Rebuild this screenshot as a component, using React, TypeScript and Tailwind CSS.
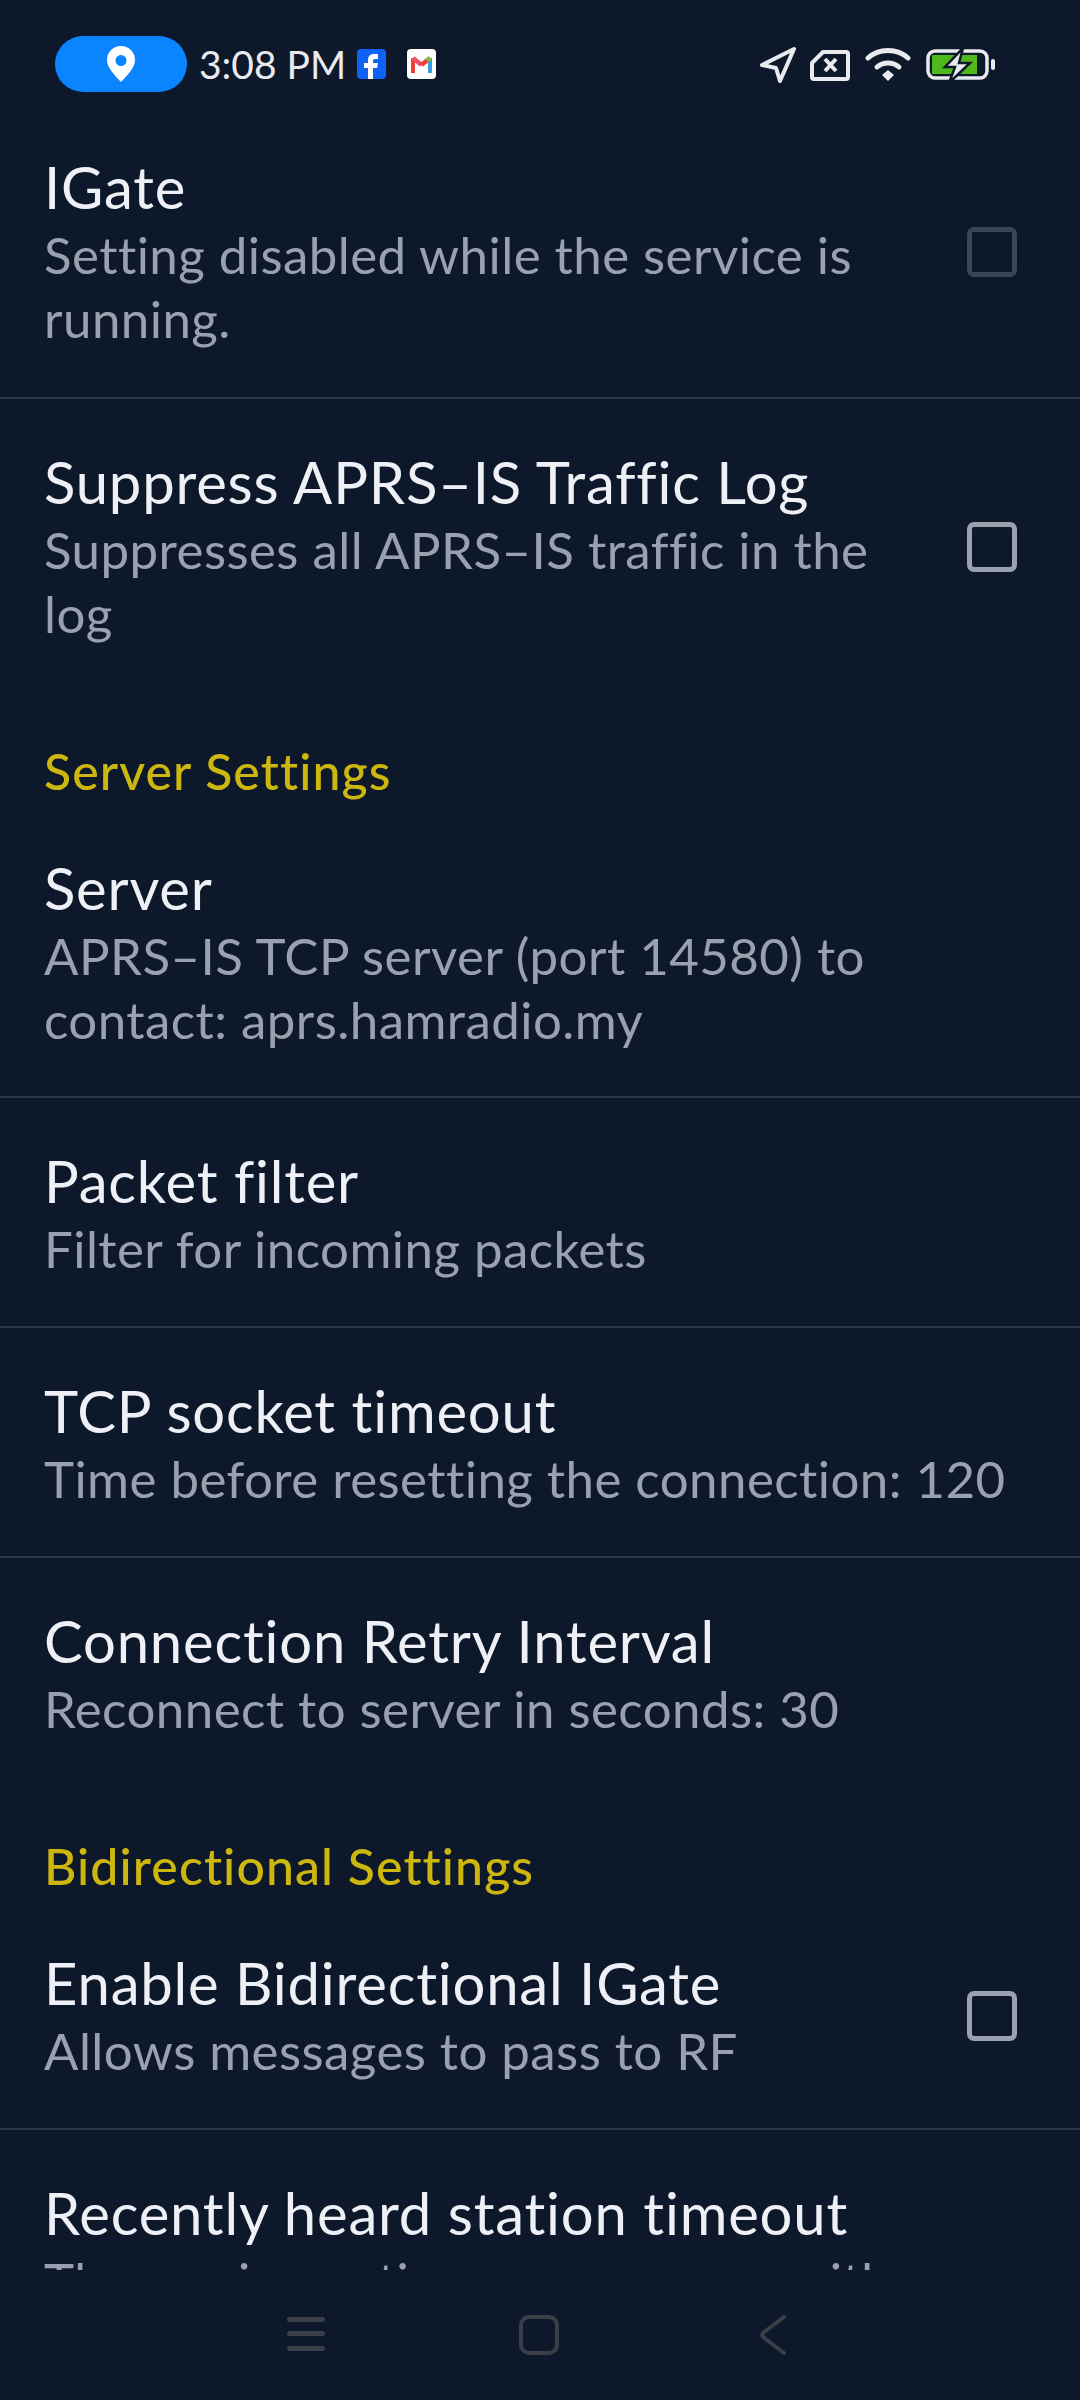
import React from 'react';

const font = "[font-family:Lato,'Noto_Sans',sans-serif]";

const Checkbox = ({ disabled = false }: { disabled?: boolean }) => (
  <div
    className={`w-[50px] h-[50px] shrink-0 rounded-[7px] border-[5px] ${
      disabled ? 'border-[#3a4557]' : 'border-[#9aa1ae]'
    }`}
  />
);

interface RowProps {
  title: string;
  summary: string;
  divider?: boolean;
  check?: boolean;
  disabled?: boolean;
  className?: string;
}

const Row = ({ title, summary, divider = true, check = false, disabled = false, className = '' }: RowProps) => (
  <div className={`flex items-center pl-[44px] pr-[63px] pt-[48px] ${divider ? 'border-b-2 border-[#2c3748]' : ''} ${className}`}>
    <div className={`flex-1 min-w-0 ${check ? 'pr-[41px]' : ''}`}>
      <div className="text-[58px] leading-[70px] tracking-[0.8px] text-[#eef0f6] whitespace-nowrap">{title}</div>
      <div className="mt-px text-[51px] leading-[64px] tracking-[0.45px] text-[#9aa1ae]">{summary}</div>
    </div>
    {check && <Checkbox disabled={disabled} />}
  </div>
);

const SectionHeader = ({ label }: { label: string }) => (
  <div className="pl-[44px] pt-[50px] h-[114px] text-[50px] leading-[60px] tracking-[1.1px] font-medium text-[#cdb70f]">{label}</div>
);

const StatusBar = () => (
  <div className="h-[104px] shrink-0 flex items-start pt-[36px] pl-[55px] pr-[84px]">
    <div className="w-[132px] h-[56px] rounded-full bg-[#0a84ff] flex items-center justify-center">
      <svg width="28" height="36" viewBox="0 0 28 36">
        <path fillRule="evenodd" d="M14 0a14 14 0 0 1 14 14c0 7-7 15-14 22C7 29 0 21 0 14A14 14 0 0 1 14 0zm0 9a5.5 5.5 0 1 0 0 11 5.5 5.5 0 0 0 0-11z" fill="#fff" />
      </svg>
    </div>
    <span className="ml-[12px] w-[146px] text-[39px] leading-[56px] text-[#e8eaee] whitespace-nowrap">3:08 PM</span>
    <svg className="ml-[12px] mt-[13px]" width="29" height="30" viewBox="0 0 29 30">
      <rect width="29" height="30" rx="4" fill="#0d63f5" />
      <path d="M11 30V19H7v-5h4v-3c0-4 2.500-6 6-6h4v5h-3c-1.500 0-2 .7-2 2v2h5l-1 5h-4v11z" fill="#fff" />
    </svg>
    <svg className="ml-[21px] mt-[13px]" width="29" height="30" viewBox="0 0 29 30">
      <rect width="29" height="30" rx="4" fill="#fff" />
      <path d="M6 24V9" stroke="#ea4335" strokeWidth="4" />
      <path d="M23 24V9" stroke="#34a0e0" strokeWidth="4" />
      <path d="M6 9l8.500 7" stroke="#f0506e" strokeWidth="4.500" />
      <path d="M14.500 16L23 9" stroke="#ea4335" strokeWidth="4.500" />
      <path d="M20 11.500L23 9" stroke="#7cc142" strokeWidth="4.500" />
    </svg>
    <div className="ml-auto flex items-start">
      <svg className="mt-[11px]" width="36" height="36" viewBox="0 0 36 36" fill="none">
        <path d="M34 2L2 18l14 3 4 13z" stroke="#e8eaee" strokeWidth="4" strokeLinejoin="round" />
      </svg>
      <svg className="ml-[14px] mt-[14px]" width="40" height="31" viewBox="0 0 40 31" fill="none">
        <path d="M13 2h23a2 2 0 0 1 2 2v23a2 2 0 0 1-2 2H4a2 2 0 0 1-2-2V13z" stroke="#e8eaee" strokeWidth="4" strokeLinejoin="round" />
        <path d="M15 9l11 12M26 9L15 21" stroke="#e8eaee" strokeWidth="4" />
      </svg>
      <svg className="ml-[15px] mt-[11px]" width="46" height="34" viewBox="0 0 46 34" fill="none">
        <path d="M3 11c11-10 29-10 40 0" stroke="#e8eaee" strokeWidth="5" strokeLinecap="round" />
        <path d="M12 20c6-5.500 16-5.500 22 0" stroke="#e8eaee" strokeWidth="5" strokeLinecap="round" />
        <path d="M17 28l6-5 6 5-6 6z" fill="#e8eaee" />
      </svg>
      <svg className="ml-[15px] mt-[13px]" width="70" height="34" viewBox="0 0 70 34" fill="none">
        <rect x="2" y="2" width="59" height="27" rx="7" stroke="#e8eaee" strokeWidth="3.500" />
        <rect x="6" y="6" width="45" height="19" fill="#4fb81c" />
        <path d="M37 -1L19 18h10l-6 16 21-20H33z" fill="#e8eaee" stroke="#0d182b" strokeWidth="2.500" />
        <rect x="65" y="10" width="4" height="11" rx="2" fill="#e8eaee" />
      </svg>
    </div>
  </div>
);

const NavBar = () => (
  <div className="flex-1 relative flex items-start pt-[45px] pl-[287px]">
    <svg width="38" height="36" viewBox="0 0 38 36">
      <rect y="2" width="38" height="5" rx="2.500" fill="#3a3f47" />
      <rect y="16" width="38" height="5" rx="2.500" fill="#3a3f47" />
      <rect y="31" width="38" height="5" rx="2.500" fill="#3a3f47" />
    </svg>
    <svg className="ml-[194px]" width="40" height="40" viewBox="0 0 40 40" fill="none">
      <rect x="2" y="2" width="36" height="36" rx="8" stroke="#3a3f47" strokeWidth="4" />
    </svg>
    <svg className="ml-[201px]" width="26" height="40" viewBox="0 0 26 40" fill="none">
      <path d="M24 2L3 18a3 3 0 0 0 0 4l21 16" stroke="#3a3f47" strokeWidth="4" strokeLinecap="round" />
    </svg>
  </div>
);

export default function App() {
  return (
    <div className={`w-[1080px] h-[2400px] overflow-hidden flex flex-col bg-[#0d182b] ${font}`}>
      <StatusBar />
      <div className="h-[2166px] shrink-0 overflow-hidden">
        <Row className="pb-[46px]" title="IGate" summary="Setting disabled while the service is running." check disabled />
        <Row className="pb-[45px]" title="Suppress APRS–IS Traffic Log" summary="Suppresses all APRS–IS traffic in the log" check divider={false} />
        <SectionHeader label="Server Settings" />
        <Row className="pb-[44px]" title="Server" summary="APRS–IS TCP server (port 14580) to contact: aprs.hamradio.my" />
        <Row className="pb-[45px]" title="Packet filter" summary="Filter for incoming packets" />
        <Row className="pb-[45px]" title="TCP socket timeout" summary="Time before resetting the connection: 120" />
        <Row className="pb-[45px]" title="Connection Retry Interval" summary="Reconnect to server in seconds: 30" divider={false} />
        <SectionHeader label="Bidirectional Settings" />
        <Row className="pb-[45px]" title="Enable Bidirectional IGate" summary="Allows messages to pass to RF" check />
        <Row className="pb-[45px]" title="Recently heard station timeout" summary="The maximum time we converse with" />
      </div>
      <NavBar />
    </div>
  );
}
